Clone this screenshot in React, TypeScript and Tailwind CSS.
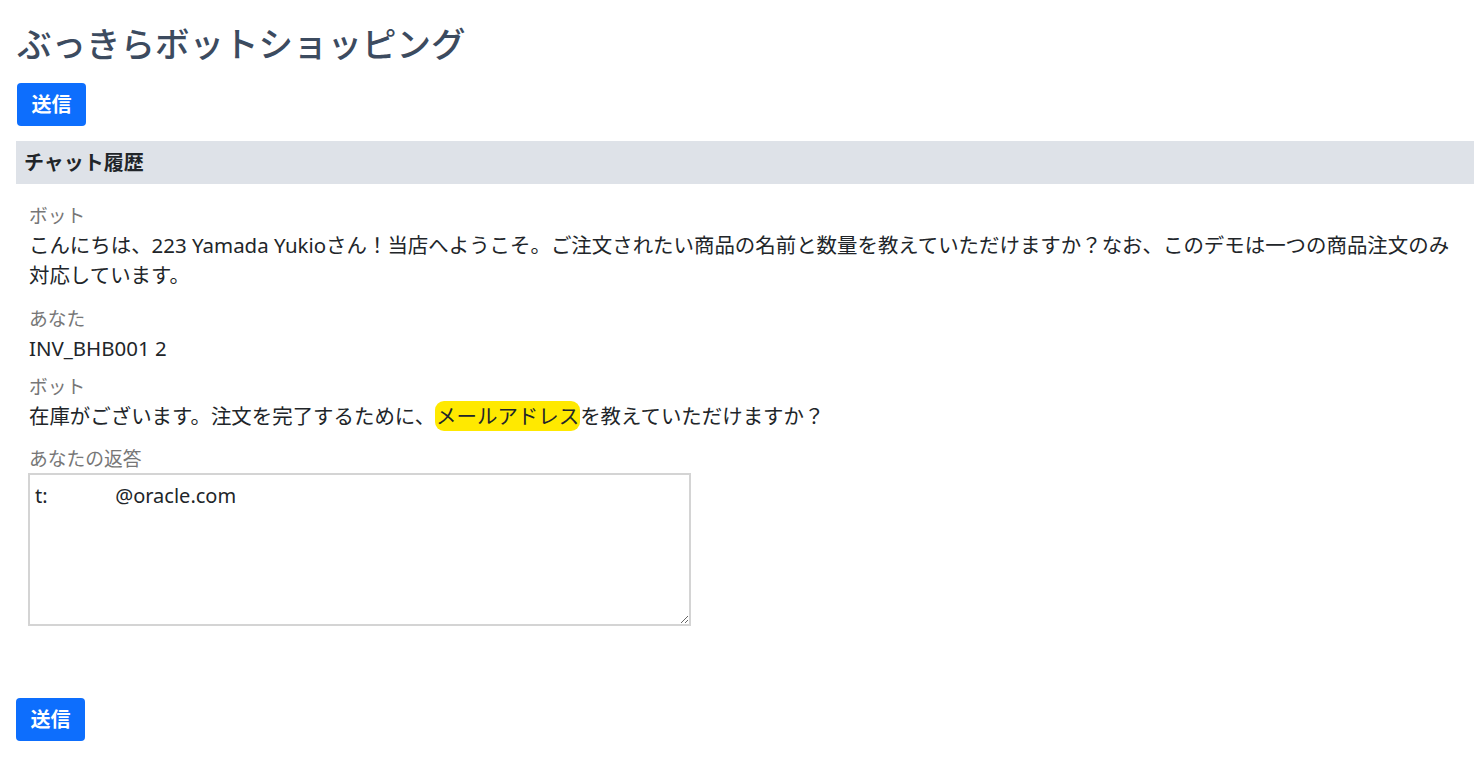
import React, { useState } from 'react';

const font = { fontFamily: '"Noto Sans", "Noto Sans CJK JP", sans-serif' };

const SendButton: React.FC<{ className?: string }> = ({ className = '' }) => (
  <button
    type="button"
    className={`h-[43px] w-[69px] rounded-[4px] bg-[#0d6efd] text-[20px] font-bold text-white ${className}`}
  >
    送信
  </button>
);

const Label: React.FC<{ children: React.ReactNode; className?: string }> = ({ children, className = '' }) => (
  <div className={`text-[18.75px] leading-[28px] text-[#777777] ${className}`}>{children}</div>
);

const Message: React.FC<{ children: React.ReactNode; className?: string }> = ({ children, className = '' }) => (
  <div className={`text-[20.45px] leading-[30px] text-[#212529] ${className}`}>{children}</div>
);

export default function App() {
  const [reply, setReply] = useState('t:             @oracle.com');

  return (
    <div className="min-h-[767px] bg-white pl-4" style={font}>
      <h1 className="ml-px pt-[20px] text-[34.5px] font-medium leading-[48px] text-[#3c4b5f]">
        ぶっきらボットショッピング
      </h1>
      <SendButton className="ml-px mt-[15px]" />

      <div className="mt-[15px] h-[43px] bg-[#dee2e8] pl-2 text-[20px] font-bold leading-[43px] text-[#212529]">
        チャット履歴
      </div>

      <div className="pl-[13px] pr-4 pt-[18px]">
        <Label>ボット</Label>
        <Message>
          こんにちは、223 Yamada Yukioさん！当店へようこそ。ご注文されたい商品の名前と数量を教えていただけますか？なお、このデモは一つの商品注文のみ対応しています。
        </Message>

        <Label className="mt-[15px]">あなた</Label>
        <Message>INV_BHB001 2</Message>

        <Label className="mt-[10px]">ボット</Label>
        <Message>
          在庫がございます。注文を完了するために、
          <span className="rounded-[9px] bg-[#ffe900] px-[1px] py-[1px]">メールアドレス</span>
          を教えていただけますか？
        </Message>

        <Label className="mt-[14px]">あなたの返答</Label>
        <textarea
          value={reply}
          onChange={(e) => setReply(e.target.value)}
          className="-ml-px block h-[153px] w-[663px] border-2 border-[#d4d4d4] px-[5px] py-[6px] text-[20px] leading-[30px] text-[#212529] outline-none"
          style={font}
        />
      </div>

      <SendButton className="mt-[72px]" />
    </div>
  );
}
